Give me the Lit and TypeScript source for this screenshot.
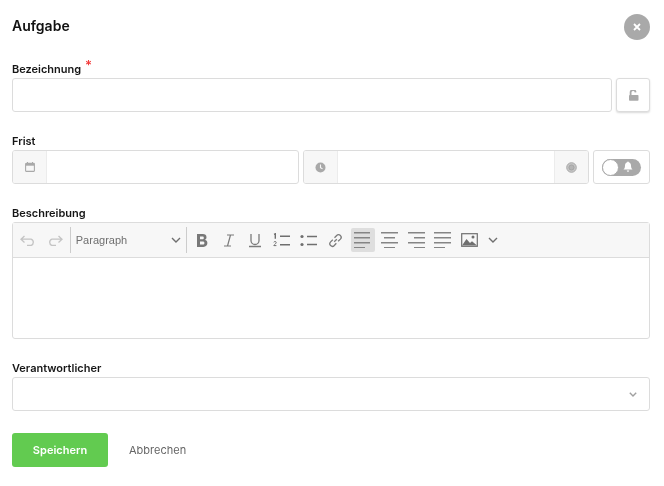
import { LitElement, html, css, svg } from "lit";
import { customElement } from "lit/decorators.js";

const lines = (rows: [number, number][]) => svg`${rows.map(([a, b], i) => svg`<line x1=${a} x2=${b} y1=${0.75 + i * 5} y2=${0.75 + i * 5}></line>`)}`;

@customElement("app-root")
export class AppRoot extends LitElement {
  static styles = css`
    :host { display: block; width: 664px; height: 486px; background: #fff; font-family: "Inter", "Liberation Sans", sans-serif; color: #111; overflow: hidden; }
    .page { display: flex; flex-direction: column; padding: 14px 14px 0 12px; will-change: transform; }
    .head { display: flex; justify-content: space-between; align-items: center; height: 26px; margin-bottom: 20px; }
    h1 { margin: 0 0 3px; font-size: 14px; font-weight: 600; color: #111; }
    .close { width: 26px; height: 26px; border-radius: 50%; background: #a9a9a9; display: flex; align-items: center; justify-content: center; }
    label { display: block; height: 18px; line-height: 18px; font-size: 11px; font-weight: 600; color: #161616; }
    label i { font-style: normal; color: #f23b3b; font-size: 13px; line-height: 10px; margin-left: 1px; position: relative; top: -3px; }
    .field { margin-bottom: 20px; }
    .row { display: flex; gap: 4px; height: 34px; }
    .box { border: 1px solid #dcdcdc; border-radius: 3px; box-sizing: border-box; background: #fff; height: 34px; }
    .grow { flex: 1; min-width: 0; }
    .lock { width: 34px; display: flex; align-items: center; justify-content: center; box-shadow: 0 1px 2px rgba(0,0,0,.15); }
    .group { display: flex; overflow: hidden; }
    .addon { width: 33px; background: #f7f7f7; display: flex; align-items: center; justify-content: center; flex: none; }
    .addon.l { border-right: 1px solid #ececec; }
    .addon.r { border-left: 1px solid #ececec; }
    .date { width: 287px; }
    .time { width: 286px; }
    .toggle-box { width: 57px; display: flex; align-items: center; justify-content: center; }
    .toggle { width: 39px; height: 17px; border-radius: 9px; background: #a9a9a9; position: relative; display: flex; align-items: center; justify-content: flex-end; padding-right: 8px; box-sizing: border-box; }
    .knob { position: absolute; left: 0; top: 0; width: 17px; height: 17px; box-sizing: border-box; border-radius: 50%; background: #fff; border: 1px solid #a9a9a9; }
    .editor { border: 1px solid #dcdcdc; border-radius: 3px; height: 117px; box-sizing: border-box; margin-bottom: 20px; }
    .bar { height: 35px; box-sizing: border-box; background: #f7f7f7; border-bottom: 1px solid #dcdcdc; display: flex; align-items: center; gap: 2.8px; padding-left: 3px; }
    .tb { width: 24px; height: 24px; display: flex; align-items: center; justify-content: center; flex: none; border-radius: 2px; }
    .tb.active { background: #dedede; }
    .tb.narrow { width: 16px; }
    .sep { width: 1px; height: 26px; background: #ccc; flex: none; margin-left: .2px; }
    .para { width: 115px; height: 24px; flex: none; display: flex; align-items: center; justify-content: space-between; box-sizing: border-box; padding: 0 5px 0 5px; margin-left: -2.8px; margin-right: -2.8px; font-family: "Liberation Sans", sans-serif; font-size: 11px; color: #6f6f6f; }
    .select { display: flex; align-items: center; justify-content: flex-end; padding-right: 12px; }
    .actions { display: flex; align-items: center; margin-top: 2px; }
    .save { width: 96px; height: 34px; border: 0; padding: 0; border-radius: 3px; background: #62cb50; color: #fff; font: 600 11px "Inter", "Liberation Sans", sans-serif; }
    .cancel { margin-left: 21px; font-size: 11px; color: #666; }
    svg { display: block; }
    .s { fill: none; stroke: #858585; stroke-width: 1.5; margin-top: -1px; }
  `;

  private undo(color: string, flip = false) {
    return svg`<svg width="16" height="11" viewBox="0 0 16 11" style=${flip ? "transform:scaleX(-1)" : ""}><path d="M4.500 1 1 4.200l3.500 3.200M1 4.200h10a3.300 3.300 0 0 1 0 6.300H7" fill="none" stroke=${color} stroke-width="1.300"></path></svg>`;
  }

  private chevron(w = 10) {
    return html`<svg width=${w} height="6" viewBox="0 0 10 6"><path d="M1 1l4 4 4-4" fill="none" stroke="#6f6f6f" stroke-width="1.400"></path></svg>`;
  }

  private align(rows: [number, number][]) {
    return html`<svg class="s" width="17" height="16" viewBox="0 0 17 16">${lines(rows)}</svg>`;
  }

  render() {
    return html`<div class="page">
      <div class="head">
        <h1>Aufgabe</h1>
        <div class="close"><svg width="8" height="8" viewBox="0 0 8 8"><path d="M1 1l6 6M7 1L1 7" stroke="#fff" stroke-width="1.800"></path></svg></div>
      </div>
      <div class="field">
        <label>Bezeichnung <i>*</i></label>
        <div class="row">
          <div class="box grow"></div>
          <div class="box lock"><svg width="11" height="11" viewBox="0 0 11 11"><path d="M2.600 5V3a2.500 2.500 0 0 1 5-.6" fill="none" stroke="#a9a9a9" stroke-width="1.800"></path><rect x="1" y="5" width="9.500" height="5.800" rx=".8" fill="#a9a9a9"></rect></svg></div>
        </div>
      </div>
      <div class="field">
        <label>Frist</label>
        <div class="row">
          <div class="box group date">
            <div class="addon l"><svg width="10" height="10" viewBox="0 0 10 10"><path d="M2 0h1v1.500H2zM7 0h1v1.500H7z" fill="#a9a9a9"></path><rect x=".6" y="1.400" width="8.800" height="8" rx=".6" fill="#f7f7f7" stroke="#a9a9a9" stroke-width="1.100"></rect><rect x="1" y="1.500" width="8" height="2.200" fill="#a9a9a9"></rect></svg></div>
            <div class="grow"></div>
          </div>
          <div class="box group time">
            <div class="addon l"><svg width="11" height="11" viewBox="0 0 11 11"><circle cx="5.500" cy="5.500" r="5" fill="#a9a9a9"></circle><path d="M5.500 2.600v3l2 1.200" fill="none" stroke="#f7f7f7" stroke-width="1.100"></path></svg></div>
            <div class="grow"></div>
            <div class="addon r"><svg width="11" height="11" viewBox="0 0 11 11"><circle cx="5.500" cy="5.500" r="4.800" fill="#c6c6c6" stroke="#a9a9a9" stroke-width="1"></circle><circle cx="5.500" cy="5.500" r="2.600" fill="#b4b4b4" stroke="#9b9b9b" stroke-width=".7"></circle></svg></div>
          </div>
          <div class="box toggle-box">
            <div class="toggle"><div class="knob"></div><svg width="10" height="12" viewBox="0 0 10 11"><path d="M5 0c.5 0 .8.300.8.800C7.300 1.200 8 2.500 8 4c0 2 .5 3 1.500 4H.5C1.500 7 2 6 2 4c0-1.500.7-2.800 2.200-3.200C4.200.3 4.500 0 5 0zM3.800 9h2.400A1.200 1.200 0 0 1 3.800 9z" fill="#fff"></path></svg></div>
          </div>
        </div>
      </div>
      <label>Beschreibung</label>
      <div class="editor">
        <div class="bar">
          <div class="tb">${this.undo("#c4c4c4")}</div>
          <div class="tb">${this.undo("#c4c4c4", true)}</div>
          <div class="sep"></div>
          <div class="para"><span>Paragraph</span>${this.chevron()}</div>
          <div class="sep"></div>
          <div class="tb"><svg width="14" height="15" viewBox="-.5 0 14 14"><path d="M1.500.5h5.800c2.300 0 3.700 1.200 3.700 3.200 0 1.300-.7 2.200-1.700 2.600 1.500.4 2.600 1.500 2.600 3.200 0 2.300-1.600 3.900-4 3.900H1.500zM4.500 3v2.800h2.400c1 0 1.400-.5 1.400-1.400S7.900 3 6.900 3zM4.500 8v3h2.800c1 0 1.600-.5 1.600-1.500S8.300 8 7.300 8z" fill="#787878"></path></svg></div>
          <div class="tb"><svg width="12" height="13" viewBox="0 0 12 13"><path d="M4 1h7M1 12h7M7.500 1l-3 11" fill="none" stroke="#7b7b7b" stroke-width="1.200"></path></svg></div>
          <div class="tb"><svg width="14" height="15" viewBox="0 0 14 15"><path d="M3 1v6.500a4 4 0 0 0 8 0V1M1 13.500h12" fill="none" stroke="#7b7b7b" stroke-width="1.300"></path></svg></div>
          <div class="tb"><svg width="18" height="15" viewBox="0 0 18 15"><path d="M1 1.300 2.300.8v5M7 3.200h10M7 11.700h10" fill="none" stroke="#6f6f6f" stroke-width="1.400"></path><path d="M.8 9.300c.4-1.200 2.600-1 2.400.3-.1.900-1.500 1.500-2.400 3h2.600" fill="none" stroke="#6f6f6f" stroke-width="1"></path></svg></div>
          <div class="tb"><svg width="18" height="13" viewBox="0 0 18 13"><circle cx="2" cy="2.500" r="1.600" fill="#6f6f6f"></circle><circle cx="2" cy="10.500" r="1.600" fill="#6f6f6f"></circle><path d="M7 2.500h10M7 10.500h10" stroke="#6f6f6f" stroke-width="1.400"></path></svg></div>
          <div class="tb"><svg width="15" height="15" viewBox="0 0 15 15"><g fill="none" stroke="#7b7b7b" stroke-width="1.300"><path d="M6.200 8.800 8.800 6.200"></path><path d="M6.500 4.800 8.700 2.500a2.500 2.500 0 0 1 3.700 3.600l-2.300 2.200"></path><path d="M8.300 10.300 6.300 12.500a2.500 2.500 0 0 1-3.700-3.600l2.200-2.200"></path></g></svg></div>
          <div class="tb active">${this.align([[0, 16], [0, 16], [0, 16], [0, 11]])}</div>
          <div class="tb">${this.align([[0, 17], [3, 14], [0, 17], [3, 14]])}</div>
          <div class="tb">${this.align([[0, 17], [6, 17], [0, 17], [6, 17]])}</div>
          <div class="tb">${this.align([[0, 17], [0, 17], [0, 17], [0, 11]])}</div>
          <div class="tb"><svg width="17" height="14" viewBox="0 0 17 14"><rect x=".7" y=".7" width="15.600" height="12.600" fill="#f7f7f7" stroke="#6f6f6f" stroke-width="1.200"></rect><path d="M1 12.500 5.500 6l3.500 4 2-1.800 5 4.300z" fill="#6f6f6f"></path><circle cx="12" cy="4" r="1.500" fill="#6f6f6f"></circle></svg></div>
          <div class="tb narrow">${this.chevron()}</div>
        </div>
      </div>
      <div class="field">
        <label>Verantwortlicher</label>
        <div class="box select"><svg width="8" height="5" viewBox="0 0 8 5"><path d="M.8.800 4 4 7.200.800" fill="none" stroke="#a0a0a0" stroke-width="1.400"></path></svg></div>
      </div>
      <div class="actions">
        <button class="save">Speichern</button>
        <span class="cancel">Abbrechen</span>
      </div>
    </div>`;
  }
}
